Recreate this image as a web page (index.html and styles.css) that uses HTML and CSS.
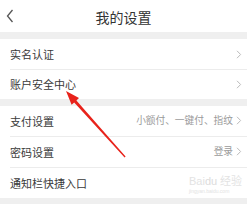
FILE: index.html
```html
<!DOCTYPE html>
<html lang="zh-CN">
<head>
<meta charset="utf-8">
<link rel="stylesheet" href="styles.css">
</head>
<body>
<div class="page">
  <header class="header">
    <svg class="back" width="8" height="14" viewBox="0 0 8 14"><path d="M6.5 1 L1.5 7 L6.5 13" fill="none" stroke="#555" stroke-width="1.3"/></svg>
    <div class="title">我的设置</div>
  </header>
  <div class="gap"></div>
  <div class="group">
    <div class="row"><div class="row-inner"><span class="label">实名认证</span><span class="right"><svg class="chev" width="6" height="9" viewBox="0 0 6 9"><path d="M1 0.8 L4.6 4.5 L1 8.2" fill="none" stroke="#bbb" stroke-width="1"/></svg></span></div></div>
    <div class="row row-short"><div class="row-inner"><span class="label">账户安全中心</span><span class="right"><svg class="chev" width="6" height="9" viewBox="0 0 6 9"><path d="M1 0.8 L4.6 4.5 L1 8.2" fill="none" stroke="#bbb" stroke-width="1"/></svg></span></div></div>
  </div>
  <div class="gap"></div>
  <div class="group">
    <div class="row"><div class="row-inner"><span class="label">支付设置</span><span class="right"><span class="value">小额付、一键付、指纹</span><svg class="chev" width="6" height="9" viewBox="0 0 6 9"><path d="M1 0.8 L4.6 4.5 L1 8.2" fill="none" stroke="#bbb" stroke-width="1"/></svg></span></div></div>
    <div class="row"><div class="row-inner"><span class="label">密码设置</span><span class="right"><span class="value">登录</span><svg class="chev" width="6" height="9" viewBox="0 0 6 9"><path d="M1 0.8 L4.6 4.5 L1 8.2" fill="none" stroke="#bbb" stroke-width="1"/></svg></span></div></div>
    <div class="row"><div class="row-inner"><span class="label">通知栏快捷入口</span></div></div>
  </div>
  <div class="gap"></div>
  <div class="watermark"><span class="wm-main">Bai<span class="wm-paw">du</span> 经验</span><span class="wm-sub">jingyan.baidu.com</span></div>
  <svg class="arrow" width="247" height="204" viewBox="0 0 247 204"><polygon points="66,91 79,98.1 76.4,100.4 125.6,156.6 124.6,157.4 74.2,102.4 71.6,104.7" fill="#e8231b"/></svg>
</div>
</body>
</html>
```
FILE: styles.css
```css
html, body {
  margin: 0;
  padding: 0;
  background: #fff;
}
.page {
  position: relative;
  width: 247px;
  height: 204px;
  overflow: hidden;
  font-family: "Noto Sans CJK SC", "Noto Sans", sans-serif;
  color: #333;
  background: #fff;
}
.header {
  height: 32px;
  display: flex;
  align-items: center;
  justify-content: center;
  position: relative;
}
.back {
  position: absolute;
  left: 6px;
  top: 9px;
}
.title {
  font-size: 14px;
  line-height: 1;
  color: #333;
  padding-top: 1px;
}
.gap {
  height: 7px;
  background: #efefef;
}
.group {
  background: #fff;
}
.row {
  padding-left: 10px;
}
.row-inner {
  height: 30px;
  display: flex;
  align-items: center;
  justify-content: space-between;
  padding-right: 5px;
  border-bottom: 1px solid #ececec;
}
.row:last-child .row-inner {
  border-bottom: none;
}
.row-short .row-inner {
  height: 29px;
}
.label {
  font-size: 11px;
  line-height: 1;
  color: #3a3a3a;
}
.right {
  display: flex;
  align-items: center;
  gap: 3px;
}
.value {
  font-size: 9.7px;
  line-height: 1;
  color: #9a9a9a;
}
.chev {
  display: block;
}
.arrow {
  position: absolute;
  left: 0;
  top: 0;
  pointer-events: none;
}
.watermark {
  position: absolute;
  left: 189px;
  top: 176px;
  display: flex;
  flex-direction: column;
  color: #e3e3e3;
  font-family: "Liberation Sans", sans-serif;
}
.wm-main {
  font-size: 11px;
  line-height: 1;
}
.wm-paw {
  color: #dcdcdc;
}
.wm-sub {
  font-size: 5px;
  line-height: 1;
  margin-top: 2px;
}
```
